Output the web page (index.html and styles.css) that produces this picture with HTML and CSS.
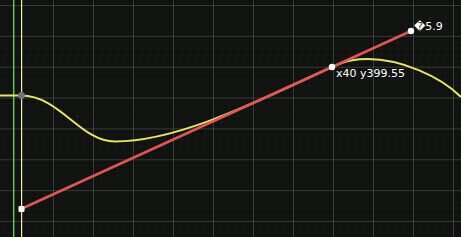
FILE: index.html
```html
<!DOCTYPE html>
<html lang="en">
<head>
  <meta charset="UTF-8">
  <title>Curve tangent</title>
  <link rel="stylesheet" href="styles.css">
</head>
<body>

  <div class="plot">
    <svg class="layer" width="461" height="237" viewBox="0 0 461 237">
      <rect class="axis-y" x="13" y="0" width="1.4" height="237" />
      <rect class="cursor" x="21" y="0" width="1.2" height="237" />

      <path class="curve" d="M0,95.5 H21 C60,95.5 80,141.5 115,141.5 C180,141.5 262,98.9 332,67 C348,59.7 358,59 368,59 C400,59 440,76 461,97" />

      <line class="tangent" x1="21" y1="209" x2="411" y2="31" />

      <circle class="knot" cx="21.5" cy="95.5" r="3.5" />
      <rect class="handle" x="18.5" y="206" width="6" height="6" rx="1" />
      <circle class="handle" cx="332" cy="67" r="3.2" />
      <circle class="handle" cx="411" cy="31" r="3.2" />

      <text class="label" x="336" y="77">x40 y399.55</text>
      <text class="label" x="414" y="30">&#xFFFD;5.9</text>
    </svg>
  </div>

</body>
</html>
```

FILE: styles.css
```css
* {
  margin: 0;
  padding: 0;
  box-sizing: border-box;
}

html, body {
  background-color: #101010;
  overflow: hidden;
}

.plot {
  width: 461px;
  height: 237px;
  background-color: #101110;
  background-image:
    linear-gradient(90deg, rgba(80, 100, 80, 0.5) 1px, transparent 1px),
    linear-gradient(rgba(80, 95, 80, 0.5) 1px, transparent 1px),
    linear-gradient(90deg, rgba(35, 55, 35, 0.22) 1px, transparent 1px),
    linear-gradient(rgba(35, 55, 35, 0.18) 1px, transparent 1px);
  background-size: 40px 100%, 100% 30.86px, 8px 100%, 100% 6.17px;
  background-position: 13px 0, 0 5px, 5px 0, 0 5px;
}

.layer {
  display: block;
}

.axis-y {
  fill: #5ad05a;
}

.cursor {
  fill: #f4f4a8;
}

.curve {
  fill: none;
  stroke: #e4e46a;
  stroke-width: 2;
}

.tangent {
  stroke: #e05555;
  stroke-width: 2.6;
}

.knot {
  fill: #6c7484;
}

.handle {
  fill: #ffffff;
}

.label {
  font-family: "DejaVu Sans", sans-serif;
  font-size: 11px;
  fill: #ffffff;
}
```
